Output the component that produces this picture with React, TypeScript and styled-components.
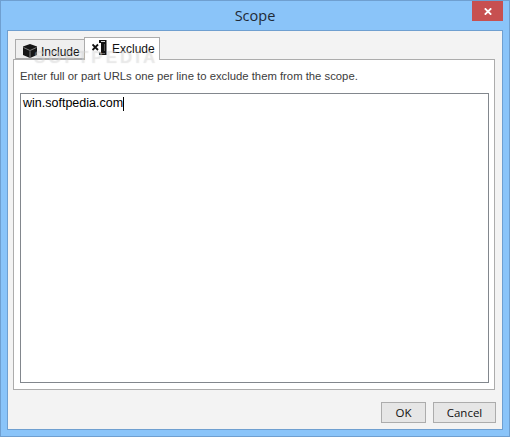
import React from "react";
import styled, { createGlobalStyle } from "styled-components";

const Global = createGlobalStyle`
  html, body {
    margin: 0;
    padding: 0;
    background: #8bc5f9;
  }
  #root {
    width: 510px;
    height: 437px;
  }
`;

const Win = styled.div`
  position: relative;
  box-sizing: border-box;
  width: 510px;
  height: 437px;
  background: #8ac4f9;
  border: 1px solid #6f9fd0;
  padding: 0 6px 6px 6px;
  display: flex;
  flex-direction: column;
  font-family: "Liberation Sans", Arial, sans-serif;
  overflow: hidden;
`;

const TitleBar = styled.div`
  height: 29px;
  flex: none;
  display: grid;
  grid-template-columns: 1fr auto 1fr;
  align-items: start;
`;

const Title = styled.div`
  grid-column: 2;
  font-family: "Open Sans", sans-serif;
  font-size: 14.5px;
  line-height: 30px;
  color: #1f2a36;
`;

const CloseButton = styled.div`
  grid-column: 3;
  justify-self: end;
  width: 31px;
  height: 20px;
  background: #c75050;
  display: flex;
  align-items: center;
  justify-content: center;
`;

const Client = styled.div`
  flex: 1;
  box-sizing: border-box;
  background: #f3f3f3;
  border: 1px solid #6f9fd0;
  padding: 6px 6px 6px 5px;
  display: flex;
  flex-direction: column;
  min-height: 0;
`;

const TabStrip = styled.div`
  display: flex;
  align-items: flex-end;
  height: 22px;
  flex: none;
  padding-left: 2px;
  position: relative;
  z-index: 1;
`;

const Tab = styled.div<{ $active?: boolean }>`
  box-sizing: border-box;
  display: flex;
  align-items: center;
  font-size: 12px;
  color: #111;
  border: 1px solid #acacac;
  border-bottom: ${p => (p.$active ? "none" : "1px solid #acacac")};
  background: ${p => (p.$active ? "#ffffff" : "#efefef")};
  height: ${p => (p.$active ? "23px" : "20px")};
  width: ${p => (p.$active ? "76px" : "70px")};
  gap: ${p => (p.$active ? "5px" : "3px")};
  margin-bottom: ${p => (p.$active ? "-1px" : "0")};
  margin-left: ${p => (p.$active ? "-1px" : "0")};
  padding: ${p => (p.$active ? "0 0 3px 7px" : "3px 0 0 6px")};
`;

const TabLabel = styled.span`
  margin-top: 3px;
`;

const Pane = styled.div`
  flex: 1;
  box-sizing: border-box;
  background: #ffffff;
  border: 1px solid #acacac;
  margin-right: 1px;
  padding: 6px 5px 6px 6px;
  display: flex;
  flex-direction: column;
  min-height: 0;
`;

const Hint = styled.div`
  font-size: 11.3px;
  line-height: 14px;
  color: #3c3c3c;
  height: 27px;
  flex: none;
  padding-top: 3px;
  box-sizing: border-box;
`;

const Editor = styled.div`
  flex: 1;
  border: 1px solid #82878d;
  padding: 2px 2px;
  font-size: 12.5px;
  line-height: 15px;
  color: #000;
  min-height: 0;
`;

const Caret = styled.span`
  display: inline-block;
  width: 1px;
  height: 14px;
  background: #000;
  vertical-align: top;
  margin-top: 1px;
`;

const Footer = styled.div`
  flex: none;
  height: 33px;
  display: flex;
  justify-content: flex-end;
  align-items: flex-end;
  gap: 7px;
`;

const Button = styled.div<{ $w: number }>`
  box-sizing: border-box;
  width: ${p => p.$w}px;
  height: 21px;
  background: #e6e6e6;
  border: 1px solid #acacac;
  font-family: "Open Sans", sans-serif;
  font-size: 11.5px;
  line-height: 19px;
  text-align: center;
  color: #101010;
`;

const Watermark = styled.div`
  position: absolute;
  left: 33px;
  top: 47px;
  z-index: 2;
  font-size: 17px;
  font-weight: 700;
  letter-spacing: 3px;
  color: rgba(255, 255, 255, 0.3);
  text-shadow: 0 0 1px rgba(110, 110, 110, 0.22);
  pointer-events: none;
`;

function CubeIcon() {
  return (
    <svg width="16" height="16" viewBox="0 0 16 16">
      <path d="M8 1 15 3.5V12L8 15 1 12V3.5Z" fill="#161616" />
      <path d="M8 8.2V15M1.5 4.5 8 7.5 14.5 4.5" stroke="#8a8a8a" strokeWidth="0.9" fill="none" />
    </svg>
  );
}

function ExcludeIcon() {
  return (
    <svg width="15" height="15" viewBox="0 0 15 15">
      <path d="M0.5 4.5 6 10M6 4.5 0.5 10" stroke="#111" strokeWidth="1.8" />
      <path d="M7 0H14.5V15H7V12.5H9V3H7Z" fill="#111" />
      <rect x="9" y="1" width="4" height="1" fill="#d8d8d8" />
      <rect x="8" y="13" width="5" height="1" fill="#666" />
      <rect x="12" y="4" width="1" height="7" fill="#555" />
    </svg>
  );
}

export default function App() {
  return (
    <Win>
      <Global />
      <TitleBar>
        <Title>Scope</Title>
        <CloseButton>
          <svg width="8" height="7" viewBox="0 0 8 7">
            <path d="M.8 .3 7.2 6.7M7.2 .3 .8 6.7" stroke="#fff" strokeWidth="1.8" />
          </svg>
        </CloseButton>
      </TitleBar>
      <Client>
        <TabStrip>
          <Tab>
            <CubeIcon />
            <TabLabel>Include</TabLabel>
          </Tab>
          <Tab $active>
            <ExcludeIcon />
            <TabLabel>Exclude</TabLabel>
          </Tab>
        </TabStrip>
        <Pane>
          <Hint>Enter full or part URLs one per line to exclude them from the scope.</Hint>
          <Editor>
            win.softpedia.com
            <Caret />
          </Editor>
        </Pane>
        <Footer>
          <Button $w={45}>OK</Button>
          <Button $w={63}>Cancel</Button>
        </Footer>
      </Client>
      <Watermark>SOFTPEDIA</Watermark>
    </Win>
  );
}
